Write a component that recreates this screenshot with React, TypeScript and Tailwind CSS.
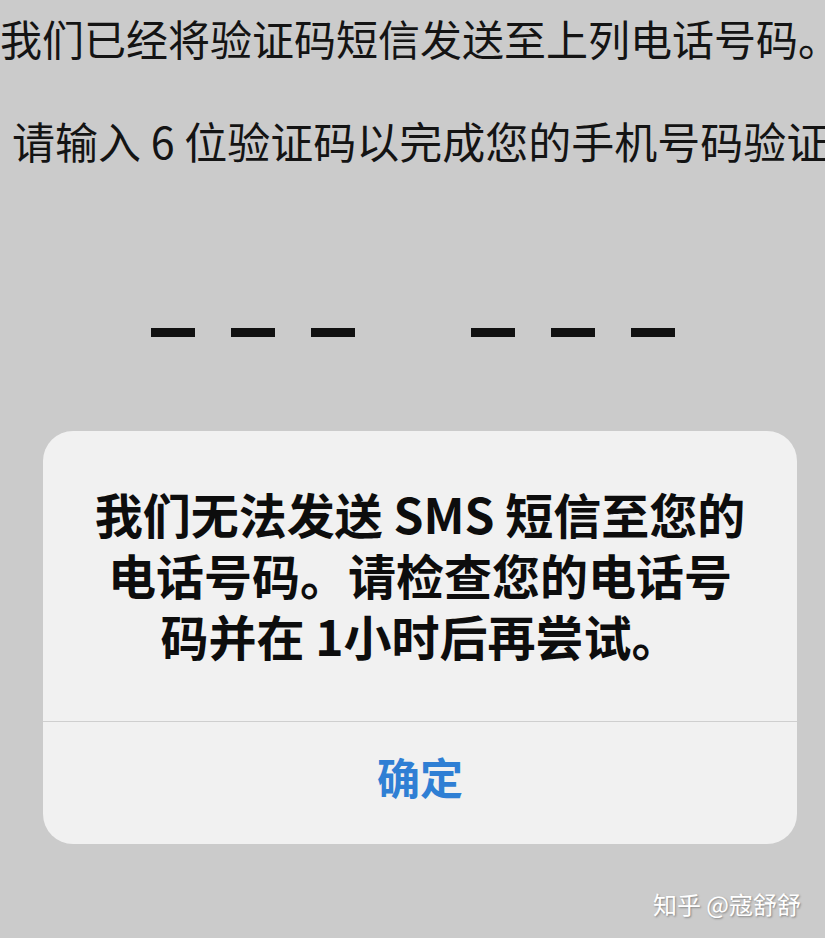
const FONT = '[font-family:"Noto_Sans_CJK_SC","Noto_Sans",sans-serif]';

// Six-slot verification code placeholder
const CodeDashes = () => (
  <div className="flex justify-center">
    <div className="flex gap-[36px]">
      {[0, 1, 2].map((i) => (
        <div key={i} className="h-[9px] w-[44px] bg-[#111]" />
      ))}
    </div>
    <div className="ml-[116px] flex gap-[36px]">
      {[0, 1, 2].map((i) => (
        <div key={i} className="h-[9px] w-[44px] bg-[#111]" />
      ))}
    </div>
  </div>
);

const AlertDialog = () => (
  <div className="ml-[43px] mt-[94px] flex h-[413px] w-[754px] flex-col overflow-hidden rounded-[30px] bg-[#f1f1f1]">
    <div className="h-[290px] pt-[52px]">
      <p className="whitespace-nowrap text-center text-[48px] font-semibold leading-[61px] text-[#0d0d0d]">
        我们无法发送 SMS 短信至您的
        <br />
        电话号码。请检查您的电话号
        <br />
        码并在 1小时后再尝试。
      </p>
    </div>
    <div className="h-px bg-[#cfcfcf]" />
    <div className="flex flex-1 items-center justify-center pb-[14px] text-[43px] font-bold text-[#2f7fd4]">
      确定
    </div>
  </div>
);

export default function App() {
  return (
    <div
      className={`relative flex h-[938px] w-[825px] flex-col overflow-hidden bg-[#cbcbcb] ${FONT}`}
    >
      <div className="mt-[12px] whitespace-nowrap text-[42px] leading-[52px] text-[#141414]">
        我们已经将验证码短信发送至上列电话号码。
      </div>
      <div className="mt-[50px] whitespace-nowrap pl-[12px] text-[43px] leading-[52px] text-[#141414]">
        请输入 6 位验证码以完成您的手机号码验证
      </div>

      <div className="mt-[162px]">
        <CodeDashes />
      </div>

      <AlertDialog />

      {/* Watermark */}
      <div className="absolute bottom-[16px] right-[24px] text-[24px] text-white [text-shadow:1px_1px_2px_rgba(0,0,0,0.35)]">
        知乎 @寇舒舒
      </div>
    </div>
  );
}
